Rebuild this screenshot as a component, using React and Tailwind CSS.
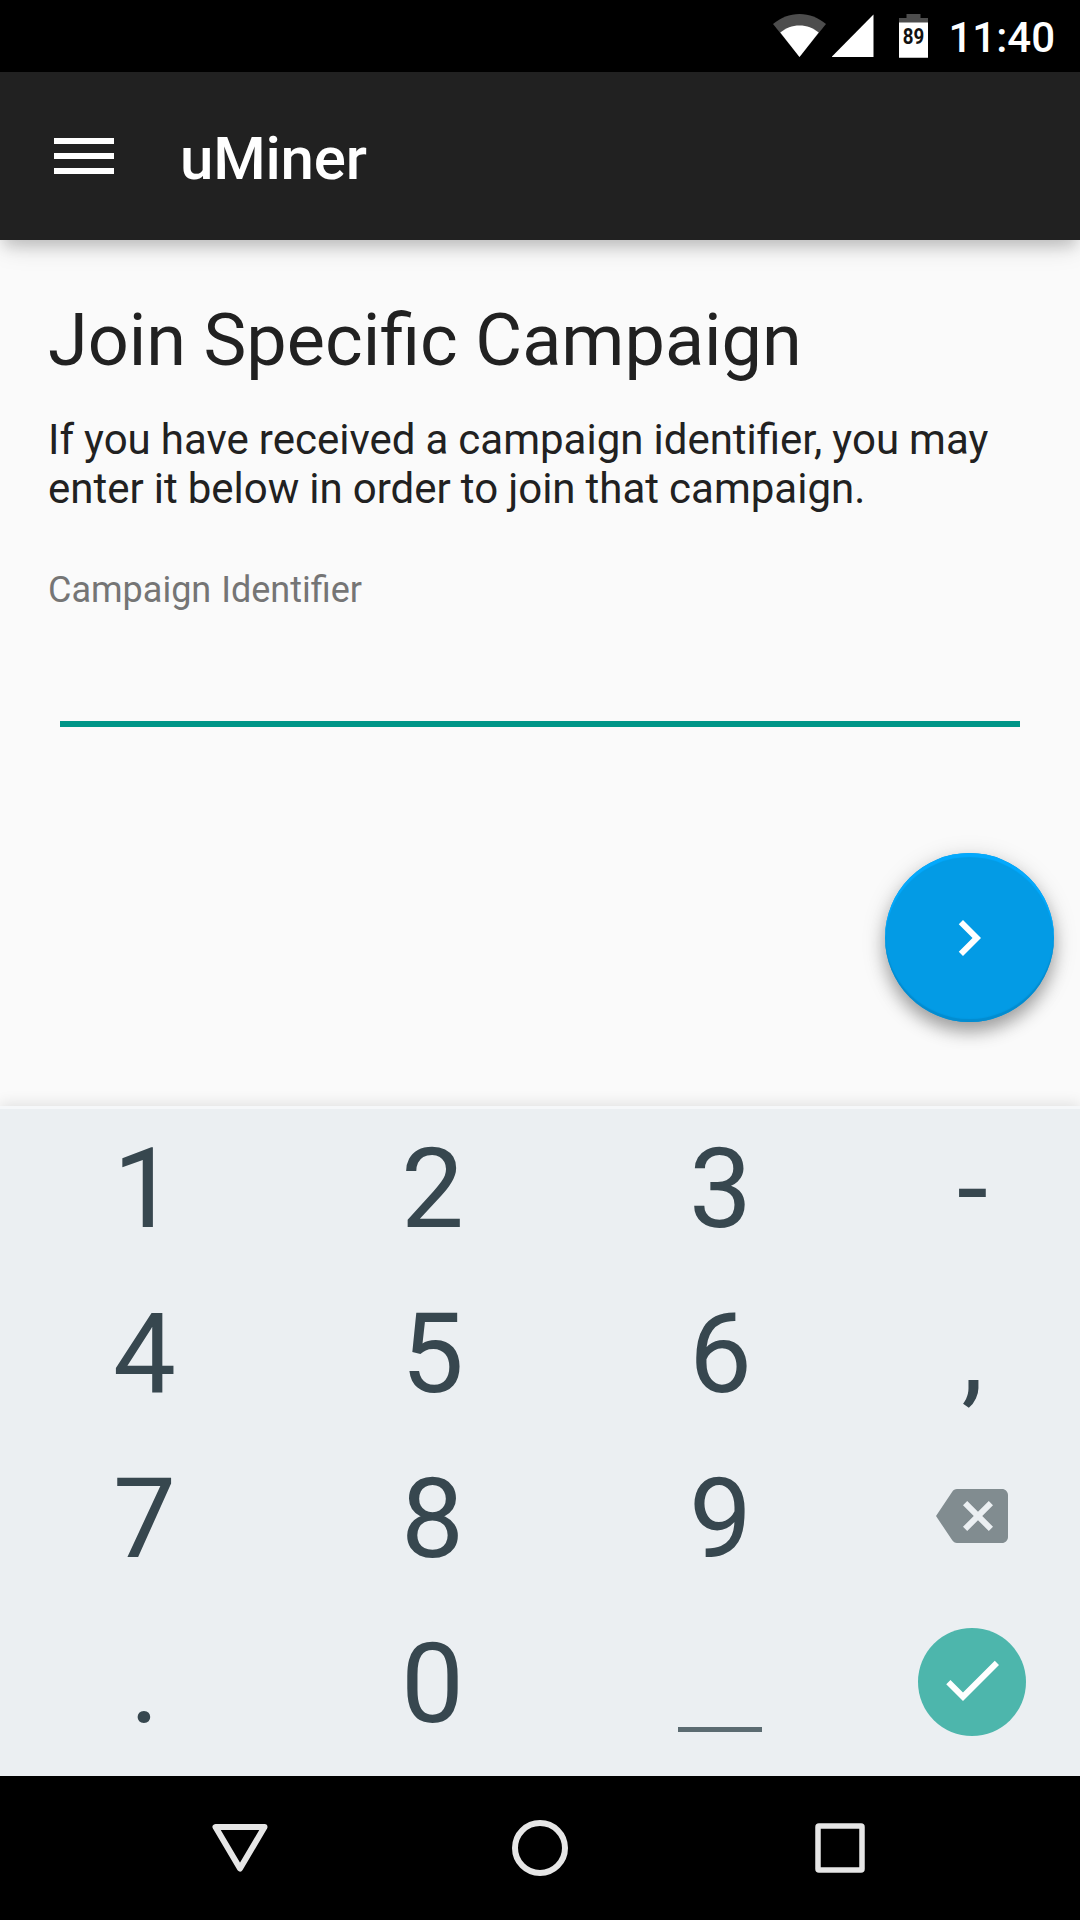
function StatusBar() {
  return (
    <div className="flex h-[72px] items-start justify-end bg-black pr-[25px] text-white">
      <svg width="56" height="72" viewBox="0 0 56 72" aria-label="Wi-Fi">
        <path d="M1 24C9 17.500 17.500 14 27.500 14S46 17.500 54 24L27.500 57z" fill="#4d4d4d" />
        <path d="M8.300 32.500C14 28 20 25.500 27.500 25.500S41 28 46.700 32.500L27.500 57z" fill="#fff" />
      </svg>
      <svg className="ml-[4px]" width="42" height="72" viewBox="0 0 42 72" aria-label="Signal">
        <path d="M-.5 57H41.500V14.500z" fill="#fff" />
      </svg>
      <svg className="ml-[25px]" width="29" height="72" viewBox="0 0 29 72" aria-label="Battery">
        <path d="M0 23V18H7.500V14H21.500V18H29V23z" fill="#4d4d4d" />
        <path d="M0 22.500H29V57.700H0z" fill="#fff" />
        <text x="3.800" y="44.300" textLength="21.500" lengthAdjust="spacingAndGlyphs" fontFamily="Roboto, sans-serif" fontSize="22.500" fontWeight="700" fill="#111">89</text>
      </svg>
      <span className="ml-[20px] mt-[13px] text-[42px] leading-[50px] font-medium">11:40</span>
    </div>
  );
}

function AppBar() {
  return (
    <header className="relative flex h-[168px] items-center bg-[#212121] pl-[54px] text-white shadow-[0_11px_12px_-4px_rgba(0,0,0,0.12),0_8px_26px_-4px_rgba(0,0,0,0.18)]">
      <div className="flex w-[60px] flex-col gap-[9px]">
        <span className="h-[6px] bg-white" />
        <span className="h-[6px] bg-white" />
        <span className="h-[6px] bg-white" />
      </div>
      <h1 className="ml-[66px] mt-[6px] text-[60px] leading-[70px] font-medium tracking-[-0.2px]">uMiner</h1>
    </header>
  );
}

function JoinForm() {
  return (
    <main className="flex h-[866px] flex-col px-12 pt-[58px] text-[#212121]">
      <h2 className="text-[72px] leading-[85px] [word-spacing:-0.3px]">Join Specific Campaign</h2>
      <p className="mt-[32px] text-[42px] leading-[49px] [word-spacing:-0.38px]">
        If you have received a campaign identifier, you may
        <br />
        enter it below in order to join that campaign.
      </p>
      <label className="mt-[56px] text-[36px] leading-[42px] text-[#757575] [word-spacing:1px]">Campaign Identifier</label>
      <div className="mx-3 mt-[110px] h-[6px] shrink-0 bg-[#009688]" />
      <button
        aria-label="Next"
        className="-mr-[21.5px] mt-[126px] flex size-[169px] shrink-0 items-center justify-center self-end rounded-full bg-[#039be5] shadow-[inset_0_4px_1px_#03a9fd,inset_0_-3px_1px_#038cd0,0_10px_16px_rgba(0,0,0,0.26),0_5px_24px_rgba(0,0,0,0.18)]"
      >
        <svg width="72" height="72" viewBox="0 0 24 24" fill="#fff">
          <path d="M10 6L8.590 7.410 13.170 12l-4.580 4.590L10 18l6-6z" />
        </svg>
      </button>
    </main>
  );
}

function Key({ children }) {
  return <button className="flex h-[165px] items-center justify-center leading-[165px]">{children}</button>;
}

function CharKey({ children }) {
  return (
    <Key>
      <span className="pl-[1px]">{children}</span>
    </Key>
  );
}

function Keyboard() {
  return (
    <section className="relative h-[670px] bg-[#ebeff2] font-normal text-[#37474f] shadow-[0_-2px_14px_rgba(0,0,0,0.11)]">
      <div className="h-[3px] bg-[#f5f7f9]" />
      <div className="-mt-[3px] grid grid-cols-[288px_288px_288px_216px] text-[112px]">
        <CharKey>1</CharKey>
        <CharKey>2</CharKey>
        <CharKey>3</CharKey>
        <CharKey>-</CharKey>
        <CharKey>4</CharKey>
        <CharKey>5</CharKey>
        <CharKey>6</CharKey>
        <CharKey>,</CharKey>
        <CharKey>7</CharKey>
        <CharKey>8</CharKey>
        <CharKey>9</CharKey>
        <Key>
          <svg className="mb-[5px]" width="72" height="72" viewBox="0 0 24 24" fill="#818c90">
            <path d="M22 3H7c-.69 0-1.230.35-1.590.88L0 12l5.410 8.110c.36.53.9.89 1.590.89h15c1.100 0 2-.9 2-2V5c0-1.100-.9-2-2-2zm-3 12.590L17.590 17 14 13.410 10.410 17 9 15.590 12.590 12 9 8.410 10.410 7 14 10.590 17.590 7 19 8.410 15.410 12 19 15.590z" />
          </svg>
        </Key>
        <CharKey>.</CharKey>
        <CharKey>0</CharKey>
        <Key>
          <span className="mt-[91px] h-[5px] w-[84px] bg-[#5b6b71]" />
        </Key>
        <Key>
          <span className="mb-[3px] flex size-[108px] items-center justify-center rounded-full bg-[#4db6ac]">
            <svg className="mb-[4px] mr-[1px]" width="72" height="72" viewBox="0 0 24 24" fill="#fff">
              <path d="M9 16.170L4.830 12l-1.420 1.410L9 19 21 7l-1.410-1.410z" />
            </svg>
          </span>
        </Key>
      </div>
    </section>
  );
}

function NavBar() {
  return (
    <nav className="relative flex h-[144px] items-center justify-center gap-[244px] bg-black">
      <svg width="56" height="56" viewBox="0 0 56 56" fill="none" stroke="#e6e6e6" strokeWidth="6" strokeLinejoin="round">
        <path d="M3.500 7H52.500L28 48.500z" />
      </svg>
      <svg width="56" height="56" viewBox="0 0 56 56" fill="none" stroke="#e6e6e6" strokeWidth="6">
        <circle cx="28" cy="28" r="25" />
      </svg>
      <svg width="56" height="56" viewBox="0 0 56 56" fill="none" stroke="#e6e6e6" strokeWidth="5.500" strokeLinejoin="round">
        <rect x="6" y="6" width="44" height="44" rx="1" />
      </svg>
    </nav>
  );
}

export default function App() {
  return (
    <div className="h-[1920px] w-[1080px] overflow-hidden bg-[#fafafa] font-[Roboto,sans-serif]">
      <StatusBar />
      <AppBar />
      <JoinForm />
      <Keyboard />
      <NavBar />
    </div>
  );
}
